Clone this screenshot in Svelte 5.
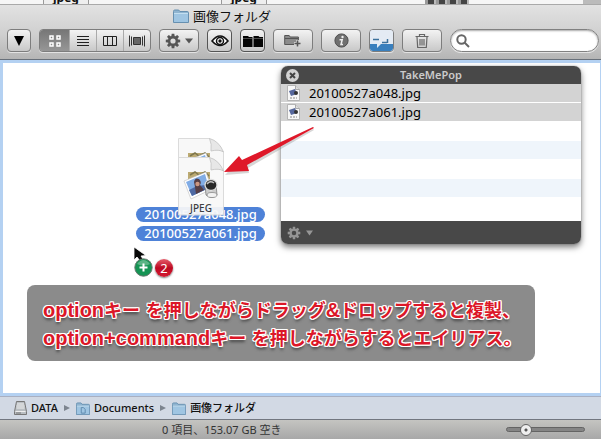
<script>
  const files = ['20100527a048.jpg', '20100527a061.jpg'];
  const teeth = [0, 45, 90, 135, 180, 225, 270, 315];
</script>

{#snippet gear()}
  <svg class="gear" viewBox="0 0 16 16" aria-hidden="true">
    {#each teeth as a}
      <path d="M6.7 0.8h2.6l.5 3.4h-3.6z" transform="rotate({a} 8 8)" fill="currentColor" />
    {/each}
    <circle cx="8" cy="8" r="3.8" fill="none" stroke="currentColor" stroke-width="2.4" />
  </svg>
{/snippet}

{#snippet folder(kind)}
  <svg class="folder" viewBox="0 0 16 14" preserveAspectRatio="none" aria-hidden="true">
    <path d="M.5 2.5q0-1.5 1.2-1.5h4l1.2 1.5h7.3q1.3 0 1.3 1.2v9.8h-15z" fill="#8fb4d0" stroke="#6790b0" />
    <path d="M1 5h14v8H1z" fill="#9fc5e2" />
    <path d="M1 4.5h14" stroke="#c2def0" />
    {#if kind === 'docs'}
      <path d="M6 6h2.5l2 2v4H6z" fill="none" stroke="#5c87aa" />
    {/if}
  </svg>
{/snippet}

{#snippet jpeg(x, y, label)}
  <g transform="translate({x} {y})">
    <path d="M.5.5h31Q35 4 45.500 14v44H.5z" fill="#f8f8f8" stroke="#d9d9d9" />
    <path d="M31.500.5Q41 3 45.500 14 41 11 33 13 34 6 31.500.5z" fill="#e6e6e6" stroke="#bdbdbd" stroke-width=".8" />
    <path d="M10 15h22v9H10z" fill="#b7a468" />
    <path d="M12 18l5-3 4 3 6-3 4 4" fill="none" stroke="#756c40" stroke-width="1.500" />
    <path d="M6 24l22-9 6 17-21 10z" fill="#fff" stroke="#bbb" stroke-width=".6" />
    <path d="M8 25l19-8 4 14-17 8z" fill="#78a6e4" />
    <path d="M11 33l8-4 9-1 3 3-17 8z" fill="#405d9b" />
    <path d="M16 25q1-5 5-3 3 3 1 6l4 5-8 4-1-7z" fill="#493039" />
    <circle cx="19.500" cy="27" r="2.200" fill="#c88f79" />
    <path d="M27 28l11-1 1 11q-5 5-11 0z" fill="#c9c9c9" stroke="#666" stroke-width=".7" />
    <ellipse cx="33" cy="28" rx="6" ry="5.500" fill="#181818" stroke="#ddd" stroke-width="1.300" />
    <path d="M29 27q3-4 7-1" fill="none" stroke="#bbb" stroke-width="1.500" />
    <ellipse cx="34" cy="38" rx="5" ry="2.500" fill="#f2f2f2" stroke="#777" stroke-width=".7" />
    {#if label}<text x="23" y="55" text-anchor="middle">JPEG</text>{/if}
  </g>
{/snippet}

<div class="window">
  <div class="behind" aria-hidden="true">
    <span class="tag first"><b>jpeg</b></span>
    <span class="tag second"><b>jpeg</b></span>
    <span class="thumbs"></span>
    <span class="edge"></span>
  </div>
  <header>
    <h1>{@render folder('plain')}<span>画像フォルダ</span></h1>
    <div class="toolbar">
      <button class="small path" aria-label="Path"><svg width="12" height="12" viewBox="0 0 12 12"><path d="M1 1h10L6 11z" fill="#000" /></svg></button>
      <div class="views">
        <button class="on" aria-label="Icon view"><svg width="12" height="12" viewBox="0 0 12 12" fill="none" stroke="#fff" stroke-width="1.500"><path d="M1 1h3v3H1zM8 1h3v3H8zM1 8h3v3H1zM8 8h3v3H8z" /></svg></button>
        <button aria-label="List view"><svg width="12" height="12" viewBox="0 0 12 12" stroke="#222"><path d="M0 1.500h12M0 4.500h12M0 7.500h12M0 10.500h12" /></svg></button>
        <button aria-label="Column view"><svg width="14" height="12" viewBox="0 0 14 12" fill="none" stroke="#222"><path d="M.5 1.500h13v9H.5zM4.500 1v10M9.500 1v10" /></svg></button>
        <button aria-label="Cover Flow"><svg width="16" height="12" viewBox="0 0 16 12" stroke="#333"><path d="M.5.5v11M2.500 1.500v9M13.500 1.500v9M15.500.5v11" /><path d="M4.500 2.500h7v7h-7z" fill="#666" /></svg></button>
      </div>
      <button class="wide action" aria-label="Action">{@render gear()}<svg width="8" height="6" viewBox="0 0 8 6"><path d="M0 .5h8L4 5.500z" fill="#555" /></svg></button>
      <button class="small dark" aria-label="Quick Look"><svg width="18" height="14" viewBox="0 0 18 14"><path d="M1 7Q9-3 17 7 9 16 1 7z" fill="#fff" stroke="#111" stroke-width="1.600" /><circle cx="9" cy="7" r="3.500" fill="#fff" stroke="#111" stroke-width="1.500" /><circle cx="9" cy="7" r="1.700" fill="#111" /></svg></button>
      <button class="small dark" aria-label="Two windows"><svg width="20" height="12" viewBox="0 0 20 12"><path d="M0 1h5l1 1h3.500v10H0zM10.500 1h5l1 1h3.500v10h-9.500z" fill="#050505" /><path d="M0 3.500h9.500M10.500 3.500H20" stroke="#777" stroke-width=".6" /></svg></button>
      <button class="wide" aria-label="New folder"><svg width="18" height="14" viewBox="0 0 18 14"><path d="M.7 10.500V1.500h4.500l1 1.500h8.200v7.500z" fill="#8b8b8b" stroke="#555" /><path d="M1 4.500h13" stroke="#555" /><path d="M13.500 6v7M10 9.500h7" stroke="#d8d8d8" stroke-width="3" /><path d="M13.500 6.500v6M10.500 9.500h6" stroke="#555" stroke-width="1.600" /></svg></button>
      <button class="wide" aria-label="Get info"><svg width="15" height="15" viewBox="0 0 15 15"><circle cx="7.500" cy="7.500" r="6.600" fill="#707070" stroke="#4f4f4f" /><circle cx="8.500" cy="4" r="1.200" fill="#eee" /><path d="M5.500 6.700h2.700L7 11.500h2" fill="none" stroke="#eee" stroke-width="1.500" /></svg></button>
      <button class="small app" aria-label="TakeMePop"><svg width="23" height="21" viewBox="0 0 23 21"><path d="M0 0h23v21H0z" fill="#e4ebf4" /><path d="M0 14h7v4l4-4h12v7H0z" fill="#397fbd" /><path d="M3 9.500h6M12 12.500h5M17.500 9v4" stroke="#3c719c" stroke-width="1.500" /></svg></button>
      <button class="wide" aria-label="Delete"><svg width="14" height="15" viewBox="0 0 14 15" fill="none" stroke="#666"><path d="M.5 3.500h13M4.500 3V1.500h5V3M2 4l.7 10.500h8.600L12 4M5 6v6.500M7 6v6.500M9 6v6.500" stroke-width="1.200" /></svg></button>
      <label class="search">
        <svg width="14" height="14" viewBox="0 0 14 14" fill="none" stroke="#666" stroke-width="2"><circle cx="5.500" cy="5.500" r="4.200" /><path d="M8.500 8.500l4.500 4.500" /></svg>
        <input type="search" aria-label="Search" />
      </label>
    </div>
  </header>

  <main>
    <section class="panel" aria-label="TakeMePop">
      <div class="panel-title">
        <button aria-label="Close"><svg width="13" height="13" viewBox="0 0 13 13"><circle cx="6.500" cy="6.500" r="6.500" fill="#d2d2d2" /><path d="M4 4l5 5M9 4l-5 5" stroke="#444" stroke-width="2" /></svg></button>
        <h2>TakeMePop</h2>
      </div>
      <ul>
        {#each files as name}
          <li>
            <svg width="13" height="16" viewBox="0 0 13 16" aria-hidden="true"><path d="M.5.5h8l4 4v11H.5z" fill="#f7f7f7" stroke="#b5b5b5" /><path d="M8.500.5v4h4" fill="#ddd" stroke="#aaa" /><path d="M2 6l6-2 2 5-6 2z" fill="#56679c" /><circle cx="9" cy="8" r="2" fill="#333" /><path d="M3 13h7" stroke="#888" stroke-dasharray="2 1" /></svg>
            <span>{name}</span>
          </li>
        {/each}
        <li></li><li></li><li></li><li></li><li></li>
      </ul>
      <div class="panel-foot">
        <button aria-label="Panel actions">{@render gear()}<svg width="7" height="6" viewBox="0 0 7 6"><path d="M0 .5h7l-3.500 5z" fill="currentColor" /></svg></button>
      </div>
    </section>

    <div class="dragged">
      {#each files as name}<span>{name}</span>{/each}
    </div>
    <svg class="documents" width="47" height="78" viewBox="0 0 47 78" aria-label="JPEG files">
      {@render jpeg(0, 0, false)}
      {@render jpeg(0, 19, true)}
    </svg>
    <svg class="arrow" width="92" height="50" viewBox="0 0 92 50" aria-hidden="true">
      <path d="M91 1L25 39l1 5L2 46 17 30l3 4L90 0z" fill="#777" opacity=".3" transform="translate(0 2)" />
      <path d="M91 1L24 38l2 6L1 45 16 29l3 4L90 0z" fill="#df1829" />
    </svg>
    <svg class="cursor" width="14" height="16" viewBox="0 0 14 16" aria-hidden="true"><path d="M1 1v13l3-3 3 4 3-2-2-3 5-.5z" fill="#080808" stroke="#fff" stroke-width=".8" /></svg>
    <div class="badges">
      <svg width="19" height="19" viewBox="0 0 19 19" aria-label="Copy"><circle cx="9.500" cy="9.500" r="8.700" fill="#159454" stroke="#69776f" /><path d="M3 6q6.500-8 13 0-6 3-13 0z" fill="#8bc9a7" opacity=".6" /><path d="M9.500 5.500v8M5.500 9.500h8" stroke="#fff" stroke-width="2" /></svg>
      <span class="count">2</span>
    </div>
    <p class="note"><b>option</b>キー<b>&nbsp;</b>を押しながらドラッグ<b>&amp;</b>ドロップすると複製、<br /><b>option+command</b>キー<b>&nbsp;</b>を押しながらするとエイリアス。</p>
  </main>

  <nav aria-label="Path">
    <a href="#data"><svg width="13" height="14" viewBox="0 0 13 14" aria-hidden="true"><path d="M2.500.5h8l2 10v3H.5v-3z" fill="#b9bec2" stroke="#777" /><path d="M3 3h7M2.500 5h8M2.500 7h8M1.500 10.500h10" stroke="#eee" /><path d="M2 12h5" stroke="#777" /></svg>DATA</a>
    <svg class="sep" width="6" height="6" viewBox="0 0 6 6" aria-hidden="true"><path d="M0 0l6 3-6 3z" fill="#7d858f" /></svg>
    <a href="#documents">{@render folder('docs')}Documents</a>
    <svg class="sep" width="6" height="6" viewBox="0 0 6 6" aria-hidden="true"><path d="M0 0l6 3-6 3z" fill="#7d858f" /></svg>
    <a href="#images">{@render folder('plain')}画像フォルダ</a>
  </nav>
  <footer>
    <span>0 項目、153.07 GB 空き</span>
    <input type="range" min="0" max="100" value="20" aria-label="Icon size" />
  </footer>
</div>

<style>
  :global(body) { margin: 0; }
  .window {
    box-sizing: border-box;
    min-height: 100vh;
    display: flex;
    flex-direction: column;
    font: 13px/16px "Noto Sans", "Noto Sans CJK JP", sans-serif;
    color: #111;
  }
  button { margin: 0; padding: 0; border: 0; background: none; font: inherit; color: inherit; display: flex; align-items: center; justify-content: center; }
  svg { display: block; flex: none; }
  .gear { width: 16px; height: 16px; }
  .folder { width: 16px; height: 14px; }

  .behind { height: 4px; overflow: hidden; display: flex; background: #f6f6f6; border-bottom: 1px solid #a9a9a9; }
  .tag { box-sizing: border-box; width: 46px; height: 4px; border: solid #999; border-width: 0 1px; background: #eee; display: flex; justify-content: center; align-items: flex-end; }
  .tag b { font-size: 12px; line-height: 12px; }
  .first { margin-left: 43px; }
  .second { margin-left: 132px; }
  .thumbs { margin-left: 158px; width: 44px; background: repeating-linear-gradient(90deg, #999 0 3px, #444 3px 9px, #bbb 9px 11px); }
  .edge { margin-left: auto; width: 18px; background: #bbb; }

  header { background: linear-gradient(#e2e2e2, #cfcfcf 55%, #b5b5b5); border-bottom: 1px solid #68707a; }
  h1 { margin: 0; padding: 2px 0 0 173px; display: flex; align-items: center; gap: 4px; font-size: 13px; line-height: 18px; font-weight: 400; }
  .toolbar { display: flex; gap: 8px; padding: 4px 2px 7px 7px; }
  .toolbar button, .search { box-sizing: border-box; height: 23px; }
  .toolbar > button, .views { box-sizing: border-box; border: 1px solid #7d7d7d; border-radius: 4px; background: linear-gradient(#f3f3f3, #c8c8c8); box-shadow: 0 1px #e3e3e3; }
  .toolbar > .small { width: 25px; flex: none; }
  .toolbar > .path { width: 24px; }
  .toolbar > .wide { width: 40px; flex: none; }
  .toolbar > .dark { border-color: #555; }
  .toolbar > .app { background: #e4ebf4; overflow: hidden; }
  .action { gap: 4px; color: #555; }
  .views { display: flex; flex: none; height: 23px; width: 112px; overflow: hidden; }
  .views button { flex: 1; height: 21px; border-left: 1px solid #aaa; }
  .views .on { flex: none; width: 29px; border-left: 0; background: linear-gradient(#777, #969696); }
  .search { flex: 1; min-width: 0; display: flex; align-items: center; gap: 4px; padding: 0 8px 0 5px; border: 1px solid #808080; border-radius: 12px; background: #fff; box-shadow: inset 0 1px 2px #aaa, 0 1px #e3e3e3; }
  .search input { flex: 1; min-width: 0; border: 0; outline: 0; background: none; font: inherit; padding: 0; appearance: none; }

  main { position: relative; flex: 1; min-height: 330px; border: 3px solid #b4d1f2; border-right-width: 1px; background: #fff; }
  .panel { position: absolute; left: 278px; top: 3px; width: 300px; border-radius: 7px; overflow: hidden; background: #fff; box-shadow: 0 0 1px #555, 0 3px 6px #777; }
  .panel-title { height: 18px; display: flex; align-items: center; padding: 0 18px 0 5px; background: #484848; }
  .panel-title button { width: 13px; height: 13px; }
  h2 { flex: 1; margin: 0; font-size: 11px; line-height: 18px; font-weight: 600; text-align: center; color: #cbcbcb; }
  ul { margin: 0; padding: 0 0 4px; list-style: none; }
  li { box-sizing: border-box; height: 19px; border-bottom: 1px solid #fff; display: flex; align-items: center; gap: 9px; padding-left: 6px; font-size: 13px; color: #000; }
  li:nth-child(-n+2) { background: #d3d3d3; }
  li:nth-child(4), li:nth-child(6) { background: #eff5fb; }
  .panel-foot { height: 23px; display: flex; align-items: center; padding-left: 6px; background: #484848; }
  .panel-foot button { gap: 5px; color: #969696; }
  .panel-foot .gear { width: 14px; height: 14px; }

  .dragged { position: absolute; left: 133px; top: 144px; width: 129px; display: flex; flex-direction: column; gap: 4px; text-align: center; color: #fff; font-weight: 500; }
  .dragged span { height: 15px; line-height: 15px; border-radius: 8px; background: #4e82d8; }
  .documents { position: absolute; left: 175px; top: 75px; opacity: .93; }
  .documents text { font: 500 10px "Noto Sans", sans-serif; fill: #333; }
  .arrow { position: absolute; left: 220px; top: 64px; }
  .cursor { position: absolute; left: 130px; top: 183px; }
  .badges { position: absolute; left: 131px; top: 195px; display: flex; gap: 2px; align-items: center; }
  .count { width: 18px; height: 18px; border-radius: 50%; background: linear-gradient(#e55d6b, #bd0922 50%, #d41b32); box-shadow: 0 1px 2px #777; color: #fff; font-size: 13px; line-height: 18px; text-align: center; }
  .note {
    position: absolute; left: 24px; top: 222px; box-sizing: border-box; width: 508px; margin: 0; padding: 10px 0 10px 16px; border-radius: 8px; background: #8b8b8b;
    font: 700 18px/28px "Noto Sans CJK JP", sans-serif; white-space: nowrap; color: #dc1728;
    text-shadow: 1px 0 #fff, -1px 0 #fff, 0 1px #fff, 0 -1px #fff, 1px 1px #fff, -1px 1px #fff, 1px -1px #fff, -1px -1px #fff, 0 3px 3px #444;
  }
  .note b { font: 700 20px/20px "Liberation Sans", sans-serif; }

  nav { height: 22px; display: flex; align-items: center; gap: 6px; padding-left: 14px; background: #d2d9e4; border-top: 1px solid #a9b0c2; border-bottom: 1px solid #727780; font-size: 11px; }
  nav a { display: flex; align-items: center; gap: 4px; color: #111; text-decoration: none; font-weight: 500; }
  nav .folder { width: 14px; height: 13px; }
  footer { height: 19px; display: flex; align-items: center; justify-content: space-between; padding: 0 16px 0 162px; background: linear-gradient(#c4c4c1, #a8a8a8); font-size: 11px; color: #333; }
  footer input { appearance: none; width: 79px; height: 12px; margin: 0; background: none; }
  footer input::-webkit-slider-runnable-track { box-sizing: border-box; height: 5px; border: 1px solid #646464; border-radius: 3px; background: #858585; }
  footer input::-webkit-slider-thumb { appearance: none; box-sizing: border-box; width: 12px; height: 12px; margin-top: -4px; border: 1px solid #666; border-radius: 50%; background: radial-gradient(circle, #555 0 1px, #eee 2px); }
</style>
